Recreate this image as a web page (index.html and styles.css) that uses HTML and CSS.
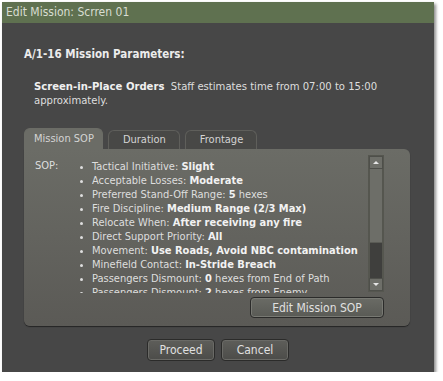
FILE: index.html
```html
<!DOCTYPE html>
<html lang="en">
<head>
    <meta charset="UTF-8">
    <title>Edit Mission: Scrren 01</title>
    <link rel="stylesheet" href="styles.css">
</head>
<body>

<div class="pencere">
    <div class="baslik">Edit Mission: Scrren 01</div>

    <div class="icerik">
        <h1 class="parametreler">A/1-16 Mission Parameters:</h1>
        <p class="emirler"><b>Screen-in-Place Orders</b>&nbsp; Staff estimates time from 07:00 to 15:00 approximately.</p>

        <div class="sekmeler">
            <div class="sekme aktif">Mission SOP</div>
            <div class="sekme">Duration</div>
            <div class="sekme">Frontage</div>
        </div>

        <div class="panel">
            <div class="liste-kutu">
                <div class="sop-etiket">SOP:</div>
                <ul class="sop-liste">
                    <li>Tactical Initiative: <b>Slight</b></li>
                    <li>Acceptable Losses: <b>Moderate</b></li>
                    <li>Preferred Stand-Off Range: <b>5</b> hexes</li>
                    <li>Fire Discipline: <b>Medium Range (2/3 Max)</b></li>
                    <li>Relocate When: <b>After receiving any fire</b></li>
                    <li>Direct Support Priority: <b>All</b></li>
                    <li>Movement: <b>Use Roads, Avoid NBC contamination</b></li>
                    <li>Minefield Contact: <b>In-Stride Breach</b></li>
                    <li>Passengers Dismount: <b>0</b> hexes from End of Path</li>
                    <li>Passengers Dismount: <b>2</b> hexes from Enemy</li>
                    <li>Engage Targets: <b>Any Range</b></li>
                </ul>
                <div class="kaydirma">
                    <div class="ok yukari"></div>
                    <div class="iz">
                        <div class="tutamak"></div>
                    </div>
                    <div class="ok asagi"></div>
                </div>
            </div>
            <div class="panel-alt">
                <button class="dugme genis">Edit Mission SOP</button>
            </div>
        </div>

        <div class="alt-dugmeler">
            <button class="dugme">Proceed</button>
            <button class="dugme">Cancel</button>
        </div>
    </div>
</div>

</body>
</html>
```

FILE: styles.css
```css
body {
    margin: 0;
    background: #ffffff;
    font-family: "DejaVu Sans Condensed", "DejaVu Sans", sans-serif;
    font-size: 11px;
    color: #dedede;
}

.pencere {
    margin: 2px 0 0 2px;
    width: 432px;
    height: 370px;
    background: #474747;
    box-shadow: 2px 2px 3px rgba(0, 0, 0, 0.45);
    display: flex;
    flex-direction: column;
}

.baslik {
    height: 21px;
    line-height: 20px;
    padding-left: 4px;
    background: #5f7150;
    color: #d8ddd2;
    font-size: 12px;
}

.icerik {
    padding: 0 0 0 22px;
    display: flex;
    flex-direction: column;
}

.parametreler {
    margin: 23px 0 0 0;
    font-size: 11.5px;
    line-height: 16px;
    font-weight: bold;
    color: #ececec;
}

.emirler {
    margin: 18px 0 0 10px;
    width: 370px;
    line-height: 14px;
    font-size: 11.2px;
}

.emirler b {
    color: #f0f0f0;
}

.sekmeler {
    margin-top: 21px;
    display: flex;
    align-items: flex-end;
    gap: 5px;
    height: 20px;
}

.sekme {
    height: 18px;
    line-height: 18px;
    padding: 0 13px 0 14px;
    background: #484846;
    border: 1px solid #5f5f5b;
    border-bottom: none;
    border-radius: 6px 6px 0 0;
    color: #d4d4d4;
}

.sekme.aktif {
    height: 20px;
    line-height: 20px;
    padding: 0 8px 0 9px;
    background: #6b6c66;
    border-color: #6b6c66;
}

.panel {
    width: 386px;
    height: 177px;
    background: linear-gradient(#6b6c66, #5b5a56);
    border-radius: 0 6px 6px 6px;
    box-shadow: 0 1px 1px rgba(0, 0, 0, 0.5);
    padding: 6px 26px 0 11px;
    box-sizing: border-box;
    display: flex;
    flex-direction: column;
}

.liste-kutu {
    display: flex;
    height: 137px;
}

.sop-etiket {
    width: 36px;
    padding-top: 4px;
    line-height: 14px;
}

.sop-liste {
    flex: 1;
    margin: 0;
    padding: 5px 0 0 21px;
    height: 133px;
    overflow: hidden;
    line-height: 14px;
}

.sop-liste li {
    white-space: nowrap;
}

.sop-liste li::marker {
    font-size: 9px;
}

.sop-liste b {
    color: #f2f2f2;
}

.kaydirma {
    width: 14px;
    display: flex;
    flex-direction: column;
    border: 1px solid #55564f;
    background: #5a5b55;
}

.ok {
    height: 13px;
    background: #6e6f69;
    border: 1px solid #4e4f4a;
    box-sizing: border-box;
    display: flex;
    align-items: center;
    justify-content: center;
}

.yukari::after {
    content: "";
    border-left: 3px solid transparent;
    border-right: 3px solid transparent;
    border-bottom: 3px solid #e6e6e6;
}

.asagi::after {
    content: "";
    border-left: 3px solid transparent;
    border-right: 3px solid transparent;
    border-top: 3px solid #e6e6e6;
}

.iz {
    flex: 1;
    background: #3f3f3d;
    border-left: 1px solid #55564f;
    border-right: 1px solid #55564f;
}

.tutamak {
    height: 73px;
    background: #6d6e68;
    border-bottom: 1px solid #5a5b55;
}

.panel-alt {
    display: flex;
    justify-content: flex-end;
    margin-top: 5px;
}

.dugme {
    height: 22px;
    padding: 0;
    font-family: inherit;
    font-size: 12px;
    color: #e0e0e0;
    background: linear-gradient(#5e5e5a, #4c4c49);
    border: 1px solid #2b2b2a;
    border-radius: 4px;
    box-shadow: inset 0 0 0 1px #6a6a66;
    width: 68px;
}

.dugme.genis {
    width: 134px;
    height: 21px;
    background: linear-gradient(#6a6b65, #595a55);
    box-shadow: inset 0 0 0 1px #787973;
}

.alt-dugmeler {
    display: flex;
    justify-content: center;
    gap: 6px;
    margin: 13px 0 0 -22px;
}
```
